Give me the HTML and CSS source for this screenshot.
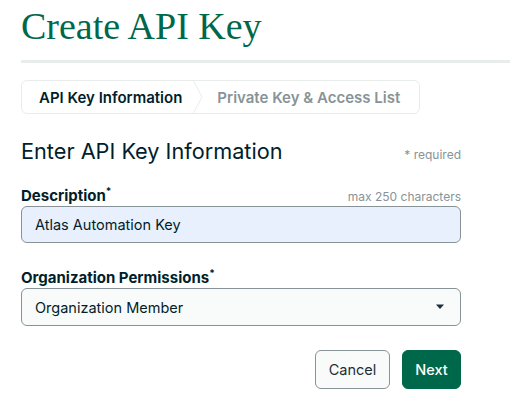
FILE: index.html
```html
<!DOCTYPE html>
<html>
<head>
<meta charset="utf-8">
<link rel="stylesheet" href="styles.css">
</head>
<body>
<div class="page">
  <h1 class="title">Create API Key</h1>
  <div class="divider"></div>
  <div class="content">
    <div class="steps">
      <div class="step active">API Key Information</div>
      <svg class="chev" width="14" height="34" viewBox="0 0 14 34"><path d="M2 0 L11 17 L2 34" fill="none" stroke="#E8EDEB" stroke-width="1"/></svg>
      <div class="step">Private Key &amp; Access List</div>
    </div>
    <div class="section-head">
      <h2 class="subtitle">Enter API Key Information</h2>
      <span class="hint">* required</span>
    </div>
    <div class="field">
      <div class="label-row">
        <label class="label">Description<sup>*</sup></label>
        <span class="hint">max 250 characters</span>
      </div>
      <div class="input autofill">Atlas Automation Key</div>
    </div>
    <div class="field second">
      <div class="label-row">
        <label class="label">Organization Permissions<sup>*</sup></label>
      </div>
      <div class="input select">
        <span>Organization Member</span>
        <svg width="10" height="6" viewBox="0 0 10 6"><path d="M1 0.5 H9 L5 5 Z" fill="#1C2D38"/></svg>
      </div>
    </div>
    <div class="actions">
      <button class="btn cancel">Cancel</button>
      <button class="btn next">Next</button>
    </div>
  </div>
</div>
</body>
</html>
```
FILE: styles.css
```css
* { box-sizing: border-box; }
body {
  margin: 0;
  background: #fff;
  font-family: Inter, "Noto Sans", sans-serif;
  color: #001E2B;
}
.page { padding-left: 21px; }
.title {
  margin: 0;
  padding-top: 4px;
  height: 60px;
  font-family: "Liberation Serif", serif;
  font-weight: normal;
  font-size: 38px;
  line-height: 44px;
  color: #00684A;
}
.divider {
  height: 3px;
  background: #E8EDEB;
}
.content { width: 440px; }
.steps {
  margin-top: 17px;
  width: 399px;
  height: 34px;
  border: 1px solid #E8EDEB;
  border-radius: 6px;
  display: flex;
  align-items: center;
}
.step {
  font-size: 15px;
  font-weight: 600;
  color: #889397;
  padding: 0 0 0 17px;
}
.step.active { color: #001E2B; padding-right: 9px; }
.chev { display: block; }
.step + .chev + .step { padding-left: 12px; }
.section-head {
  margin-top: 24px;
  display: flex;
  justify-content: space-between;
  align-items: baseline;
}
.subtitle {
  margin: 0;
  font-size: 21.7px;
  font-weight: 400;
  color: #001E2B;
}
.hint {
  font-size: 12px;
  color: #889397;
}
.field { margin-top: 21px; }
.field.second { margin-top: 24px; }
.label-row {
  display: flex;
  justify-content: space-between;
  align-items: baseline;
  height: 21px;
}
.label {
  font-size: 15px;
  font-weight: 700;
  color: #001E2B;
}
.label sup { font-size: 10px; }
.input {
  height: 37px;
  border: 1px solid #889397;
  border-radius: 6px;
  padding: 0 13px;
  display: flex;
  align-items: center;
  font-size: 14.5px;
  color: #001E2B;
}
.autofill { background: #E8F0FE; }
.select {
  background: #F9FBFA;
  justify-content: space-between;
  height: 38px;
  padding-right: 15px;
}
.actions {
  margin-top: 24px;
  display: flex;
  justify-content: flex-end;
  gap: 12px;
}
.btn {
  height: 39px;
  border-radius: 6px;
  font-family: Inter, "Noto Sans", sans-serif;
  font-size: 14.5px;
  padding: 0;
  cursor: pointer;
}
.cancel {
  width: 75px;
  background: #F9FBFA;
  border: 1px solid #889397;
  color: #1C2D38;
}
.next {
  width: 59px;
  background: #00684A;
  border: 1px solid #00684A;
  color: #fff;
  font-weight: 500;
}
```
